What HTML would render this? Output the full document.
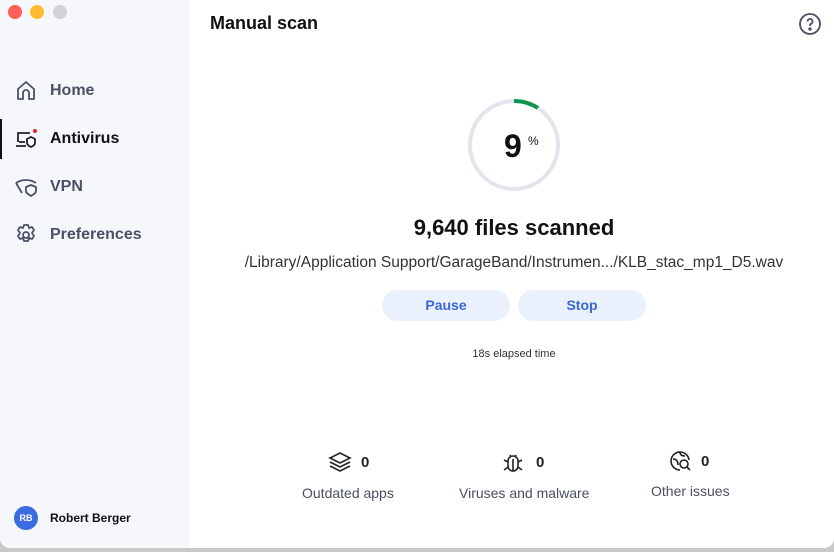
<!DOCTYPE html>
<html><head><style>
*{margin:0;padding:0;box-sizing:border-box}
body{width:834px;height:552px;overflow:hidden;background:#c9c9c9;font-family:"Liberation Sans",sans-serif;position:relative}
.win{position:absolute;left:0;top:0;width:834px;height:548px;background:#fff;border-radius:0 0 10px 10px;overflow:hidden}
.side{position:absolute;left:0;top:0;width:190px;height:548px;background:#f6f7fb}
.dot{position:absolute;top:5px;width:14px;height:14px;border-radius:50%}
.nav{position:absolute;left:14px;display:flex;align-items:center;font-size:16px;font-weight:bold;color:#4a5068}
.nav svg{width:24px;height:24px;margin-right:12px}
.c{position:absolute;text-align:center}
.btn{position:absolute;top:290px;width:128px;height:31px;border-radius:16px;background:#eaf1fc;color:#3a67d8;font-weight:bold;font-size:14px;text-align:center;line-height:31px}
.stat{position:absolute;display:flex;align-items:center;font-weight:bold;font-size:15px;color:#222}
.lbl{position:absolute;font-size:14px;color:#4a4f62}
</style></head><body>
<div class="win">
<div class="side">
<div class="dot" style="left:8px;background:#fe5f57"></div>
<div class="dot" style="left:30px;background:#febc2e"></div>
<div class="dot" style="left:53px;background:#d1d3d8"></div>
<div class="nav" style="top:79px"><svg viewBox="0 0 24 24" fill="none" stroke="#4a5068" stroke-width="1.8"><path d="M4 10l8-7 8 7v10h-5v-6a3 3 0 0 0-6 0v6H4z" stroke-linejoin="round"/></svg>Home</div>
<div style="position:absolute;left:0;top:119px;width:2px;height:40px;background:#111"></div>
<div class="nav" style="top:127px;color:#111"><svg viewBox="0 0 24 24" fill="none" stroke="#222" stroke-width="1.8"><path d="M4 15V6h12M2 19h10M5 15h6"/><path d="M13 12l4-2 4 2v4c0 2-2 3-4 4-2-1-4-2-4-4z"/><circle cx="21" cy="4" r="2" fill="#e0252f" stroke="none"/></svg>Antivirus</div>
<div class="nav" style="top:175px"><svg viewBox="0 0 24 24" fill="none" stroke="#4a5068" stroke-width="1.8"><path d="M2 8c6-4 14-4 20 0M2 8l6 10M12 12l5-2 5 2v4c0 2-2 3-5 5-3-2-5-3-5-5z"/></svg>VPN</div>
<div class="nav" style="top:223px"><svg viewBox="0 0 24 24" fill="none" stroke="#4a5068" stroke-width="1.8"><circle cx="12" cy="12" r="3"/><path d="M10 2h4l1 3 3-1 2 3-2 3 2 3-2 3-3-1-1 3h-4l-1-3-3 1-2-3 2-3-2-3 2-3 3 1z" stroke-linejoin="round"/></svg>Preferences</div>
<div style="position:absolute;left:14px;top:506px;width:24px;height:24px;border-radius:50%;background:#3a6be0;color:#fff;font-size:9px;font-weight:bold;text-align:center;line-height:24px">RB</div>
<div style="position:absolute;left:50px;top:511px;font-size:12px;font-weight:bold;color:#111">Robert Berger</div>
</div>
<div style="position:absolute;left:210px;top:13px;font-size:18px;font-weight:bold;color:#111">Manual scan</div>
<svg style="position:absolute;left:798px;top:12px" width="24" height="24" viewBox="0 0 24 24" fill="none" stroke="#4a4f62" stroke-width="1.8"><circle cx="12" cy="12" r="10"/><path d="M9.5 9.5a2.5 2.5 0 1 1 3.5 2.3c-.7.3-1 .8-1 1.5v.7"/><circle cx="12" cy="17" r=".8" fill="#4a4f62"/></svg>
<svg style="position:absolute;left:467px;top:98px" width="94" height="94" viewBox="0 0 94 94"><circle cx="47" cy="47" r="44" fill="none" stroke="#e3e5ed" stroke-width="4"/><path d="M47 3A44 44 0 0 1 71 10" fill="none" stroke="#0e9650" stroke-width="4"/></svg>
<div class="c" style="left:504px;top:128px;font-size:32px;font-weight:bold;color:#111">9</div>
<div class="c" style="left:528px;top:134px;font-size:12px;color:#111">%</div>
<div class="c" style="left:300px;width:428px;top:215px;font-size:22px;font-weight:bold;color:#111">9,640 files scanned</div>
<div class="c" style="left:220px;width:588px;top:254px;font-size:15.5px;color:#333">/Library/Application Support/GarageBand/Instrumen.../KLB_stac_mp1_D5.wav</div>
<div class="btn" style="left:382px">Pause</div>
<div class="btn" style="left:518px">Stop</div>
<div class="c" style="left:414px;width:200px;top:348px;font-size:11px;color:#333">18s elapsed time</div>
<div class="stat" style="left:328px;top:451px"><svg width="24" height="22" viewBox="0 0 24 22" fill="none" stroke="#222" stroke-width="1.6"><path d="M12 2l10 5-10 5-10-5z M2 11l10 5 10-5 M2 15l10 5 10-5"/></svg><span style="margin-left:9px">0</span></div>
<div class="lbl" style="left:302px;top:485px">Outdated apps</div>
<div class="stat" style="left:502px;top:451px"><svg width="22" height="22" viewBox="0 0 22 22" fill="none" stroke="#222" stroke-width="1.6"><path d="M6 10a5 5 0 0 1 10 0v5a5 5 0 0 1-10 0zM11 8v12M8 4l1 2M14 4l-1 2M2 9l4 2M20 9l-4 2M2 19l4-3M20 19l-4-3"/></svg><span style="margin-left:12px">0</span></div>
<div class="lbl" style="left:459px;top:485px">Viruses and malware</div>
<div class="stat" style="left:670px;top:450px"><svg width="22" height="22" viewBox="0 0 22 22" fill="none" stroke="#222" stroke-width="1.6"><path d="M10 20a9 9 0 1 1 9-10M3 9c4 0 5 3 5 6M10 2c0 3 2 4 5 4"/><circle cx="14" cy="14" r="4"/><path d="M17 17l3 3"/></svg><span style="margin-left:9px">0</span></div>
<div class="lbl" style="left:651px;top:483px">Other issues</div>
</div>
</body></html>
